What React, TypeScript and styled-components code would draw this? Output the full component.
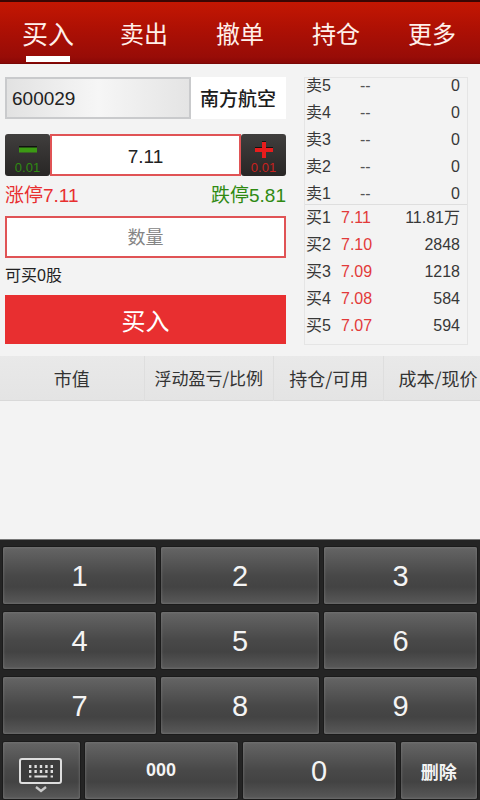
import React, { useState } from 'react';
import styled, { createGlobalStyle, css } from 'styled-components';

const latin = `"Liberation Sans", "Noto Sans CJK SC", sans-serif`;
const han = `"Noto Sans CJK SC", "Liberation Sans", sans-serif`;
const red = '#e82f30';
const green = '#2f8a12';

const GlobalStyle = createGlobalStyle`
  *, *::before, *::after { box-sizing: border-box; }
  body { margin: 0; background: #f3f3f3; color: #222; font-family: ${latin}; }
  button, input { font-family: inherit; margin: 0; border-radius: 0; }
  button { padding: 0; border: 0; cursor: pointer; }
  table { border-collapse: collapse; border-spacing: 0; }
`;

const Page = styled.div`
  display: flex;
  flex-direction: column;
  min-height: 100vh;
  overflow: hidden;
`;

const TabBar = styled.nav`
  display: grid;
  grid-template-columns: repeat(5, 1fr);
  height: 64px;
  border-top: 2px solid #3a0603;
  border-bottom: 1px solid #7a0705;
  background: linear-gradient(#c41702, #ad1004 45%, #980c07 90%, #8a0806);
`;

const Tab = styled.button<{ $active?: boolean }>`
  display: flex;
  flex-direction: column;
  align-items: center;
  justify-content: space-between;
  padding: 11px 0 1px;
  background: none;
  color: #fff0ea;
  font-family: ${han};
  font-size: ${(p) => (p.$active ? 26 : 24)}px;
  line-height: 40px;
  &::after {
    content: '';
    width: 44px;
    height: 6px;
    background: ${(p) => (p.$active ? '#fff' : 'transparent')};
  }
`;

const TradeArea = styled.main`
  display: grid;
  grid-template-columns: minmax(0, 281fr) minmax(0, 164fr);
  gap: 18px;
  align-items: start;
  padding: 13px 12px 11px 5px;
`;

const OrderForm = styled.form`
  display: flex;
  flex-direction: column;
`;

const StockRow = styled.div`
  display: flex;
  height: 42px;
  margin-bottom: 15px;
`;

const CodeInput = styled.input`
  flex: 1;
  min-width: 0;
  padding: 2px 5px 0;
  border: 2px solid #c9cacc;
  background: linear-gradient(90deg, #e2e2e2, #f6f6f6 50%, #e4e4e4);
  color: #222;
  font-size: 19px;
`;

const StockName = styled.output`
  width: 95px;
  padding: 2px 0 0 9px;
  background: #fff;
  color: #1c1c1c;
  font-size: 19px;
  font-weight: 500;
  line-height: 42px;
  white-space: nowrap;
`;

const Stepper = styled.div`
  display: flex;
  height: 42px;
`;

const StepButton = styled.button<{ $tone: string }>`
  display: flex;
  flex-direction: column;
  align-items: center;
  justify-content: flex-end;
  width: 45px;
  padding-bottom: 1px;
  border-radius: 3px;
  background: linear-gradient(#403e3d, #282625);
  color: ${(p) => p.$tone};
  font-size: 13px;
  line-height: 14px;
`;

const outlined = css`
  flex: 1;
  min-width: 0;
  padding: 3px 0 0;
  border: 2px solid #e05355;
  background: #fff;
  color: #222;
  text-align: center;
  font-size: 19px;
  &::placeholder { color: #858585; opacity: 1; }
`;

const PriceInput = styled.input`${outlined}`;

const QuantityInput = styled.input`
  ${outlined}
  flex: none;
  height: 42px;
  font-size: 18px;
`;

const Limits = styled.div`
  display: flex;
  justify-content: space-between;
  height: 40px;
  font-size: 19px;
  line-height: 40px;
`;

const Limit = styled.span<{ $tone: string }>`
  color: ${(p) => p.$tone};
`;

const Available = styled.p`
  margin: 0 0 2px;
  font-size: 16px;
  line-height: 35px;
`;

const BuyButton = styled.button`
  height: 49px;
  background: ${red};
  color: #fff;
  font-size: 24px;
`;

const BookPanel = styled.div`
  padding-bottom: 4px;
  border: 1px solid #e5e5e5;
  border-top-width: 0;
`;

const Book = styled.table`
  width: 100%;
  font-size: 16px;
  line-height: 16px;
  color: #383838;
`;

const Asks = styled.tbody`
  border-top: 1px solid #e5e5e5;
  border-bottom: 1px solid #dedede;
  tr { height: 27px; vertical-align: top; }
  tr:last-child { height: 19px; }
`;

const Bids = styled.tbody`
  tr { height: 27px; vertical-align: middle; }
`;

const Level = styled.th`
  width: 36px;
  padding: 0 0 0 1px;
  font-weight: 400;
  text-align: left;
  white-space: nowrap;
`;

const Price = styled.td<{ $empty?: boolean }>`
  padding: 0 0 0 ${(p) => (p.$empty ? 19 : 0)}px;
  color: ${(p) => (p.$empty ? '#555' : '#e23a3a')};
`;

const Volume = styled.td`
  padding: 0 7px 0 0;
  text-align: right;
`;

const Holdings = styled.table`
  width: 100%;
  table-layout: fixed;
  border-bottom: 1px solid #d9d9d9;
  background: linear-gradient(#e9e9e9, #e4e4e4);
  font-family: ${han};
  color: #333;
`;

const HoldingHead = styled.th<{ $share: number; $compact?: boolean }>`
  width: ${(p) => p.$share}%;
  padding: 0;
  border-left: 1px solid #dedede;
  font-size: ${(p) => (p.$compact ? 17 : 18)}px;
  font-weight: 400;
  line-height: 44px;
  white-space: nowrap;
  &:first-child { border-left: 0; }
  &:last-child { padding-left: 14px; text-align: left; }
`;

const Keypad = styled.section`
  display: flex;
  flex-direction: column;
  gap: 8px;
  margin-top: auto;
  padding: 7px 3px 1px;
  border-top: 1px solid #777;
  background: #242424;
`;

const KeyRow = styled.div<{ $columns: string }>`
  display: grid;
  grid-template-columns: ${(p) => p.$columns};
  gap: 5px;
`;

const Key = styled.button<{ $small?: boolean }>`
  display: flex;
  align-items: center;
  justify-content: center;
  height: 57px;
  padding-top: ${(p) => (p.$small ? 0 : 2)}px;
  border-radius: 2px;
  background: linear-gradient(#656565, #484848 50%, #434343 70%, #595959);
  box-shadow: 0 0 0 1px #1b1b1b, inset 0 0 3px #7d7d7d;
  color: #f4f4f4;
  font-size: ${(p) => (p.$small ? 18 : 29)}px;
  font-weight: ${(p) => (p.$small ? 700 : 400)};
`;

const tabs = ['买入', '卖出', '撤单', '持仓', '更多'];
const asks = [5, 4, 3, 2, 1];
const bids = [
  ['买1', '7.11', '11.81万'],
  ['买2', '7.10', '2848'],
  ['买3', '7.09', '1218'],
  ['买4', '7.08', '584'],
  ['买5', '7.07', '594'],
];
const digitRows = [['1', '2', '3'], ['4', '5', '6'], ['7', '8', '9']];

const MinusIcon = () => (
  <svg width="20" height="20" viewBox="0 0 20 20" aria-hidden="true">
    <path d="M1 7h18" stroke="#111" strokeWidth="4" />
    <path d="M1 9h18" stroke="#3c9a14" strokeWidth="5" />
  </svg>
);

const PlusIcon = () => (
  <svg width="20" height="20" viewBox="0 0 20 20" aria-hidden="true">
    <path d="M1 8h18M10 0v16" stroke="#111" strokeWidth="4" />
    <path d="M1 9h18M10 1v16" stroke="#e81c1c" strokeWidth="4" />
  </svg>
);

const KeyboardIcon = () => (
  <svg width="44" height="44" viewBox="0 0 44 44" fill="none" aria-hidden="true">
    <rect x="1" y="9" width="41" height="24" rx="2" fill="#3c3c3c" stroke="#dedede" strokeWidth="2" />
    <path d="M10 16.5h24M10 21.500h24" stroke="#dedede" strokeWidth="3" strokeDasharray="2.4 3" />
    <path d="M10 26.5h2.4M15.4 26.5h13M31.6 26.5h2.4" stroke="#dedede" strokeWidth="2" />
    <path d="M17 37l5 4 5-4" stroke="#c9c9c9" strokeWidth="2.4" />
  </svg>
);

export default function App() {
  const [code, setCode] = useState('600029');
  const [price, setPrice] = useState('7.11');
  const [quantity, setQuantity] = useState('');
  const [tab, setTab] = useState(tabs[0]);

  const step = (delta: number) => setPrice((Number(price) + delta).toFixed(2));
  const press = (digits: string) => setQuantity(quantity + digits);

  return (
    <Page>
      <GlobalStyle />
      <TabBar>
        {tabs.map((name) => (
          <Tab key={name} type="button" $active={name === tab} onClick={() => setTab(name)}>
            {name}
          </Tab>
        ))}
      </TabBar>

      <TradeArea>
        <OrderForm onSubmit={(e) => e.preventDefault()}>
          <StockRow>
            <CodeInput aria-label="股票代码" value={code} onChange={(e) => setCode(e.target.value)} />
            <StockName>南方航空</StockName>
          </StockRow>
          <Stepper>
            <StepButton type="button" $tone={green} onClick={() => step(-0.01)}>
              <MinusIcon />
              0.01
            </StepButton>
            <PriceInput aria-label="价格" value={price} onChange={(e) => setPrice(e.target.value)} />
            <StepButton type="button" $tone="#c9211e" onClick={() => step(0.01)}>
              <PlusIcon />
              0.01
            </StepButton>
          </Stepper>
          <Limits>
            <Limit $tone={red}>涨停7.11</Limit>
            <Limit $tone={green}>跌停5.81</Limit>
          </Limits>
          <QuantityInput
            aria-label="数量"
            placeholder="数量"
            value={quantity}
            onChange={(e) => setQuantity(e.target.value)}
          />
          <Available>可买0股</Available>
          <BuyButton type="submit">买入</BuyButton>
        </OrderForm>

        <BookPanel>
          <Book>
            <Asks>
              {asks.map((n) => (
                <tr key={n}>
                  <Level scope="row">卖{n}</Level>
                  <Price $empty>--</Price>
                  <Volume>0</Volume>
                </tr>
              ))}
            </Asks>
            <Bids>
              {bids.map(([level, value, volume]) => (
                <tr key={level}>
                  <Level scope="row">{level}</Level>
                  <Price>{value}</Price>
                  <Volume>{volume}</Volume>
                </tr>
              ))}
            </Bids>
          </Book>
        </BookPanel>
      </TradeArea>

      <Holdings>
        <thead>
          <tr>
            <HoldingHead scope="col" $share={30}>市值</HoldingHead>
            <HoldingHead scope="col" $share={27} $compact>浮动盈亏/比例</HoldingHead>
            <HoldingHead scope="col" $share={23}>持仓/可用</HoldingHead>
            <HoldingHead scope="col" $share={20}>成本/现价</HoldingHead>
          </tr>
        </thead>
      </Holdings>

      <Keypad>
        {digitRows.map((row) => (
          <KeyRow key={row[0]} $columns="153fr 158fr 153fr">
            {row.map((digit) => (
              <Key key={digit} type="button" onClick={() => press(digit)}>{digit}</Key>
            ))}
          </KeyRow>
        ))}
        <KeyRow $columns="1fr 2fr 2fr 1fr">
          <Key type="button" aria-label="收起键盘"><KeyboardIcon /></Key>
          <Key type="button" $small onClick={() => press('000')}>000</Key>
          <Key type="button" onClick={() => press('0')}>0</Key>
          <Key type="button" $small onClick={() => setQuantity(quantity.slice(0, -1))}>删除</Key>
        </KeyRow>
      </Keypad>
    </Page>
  );
}
